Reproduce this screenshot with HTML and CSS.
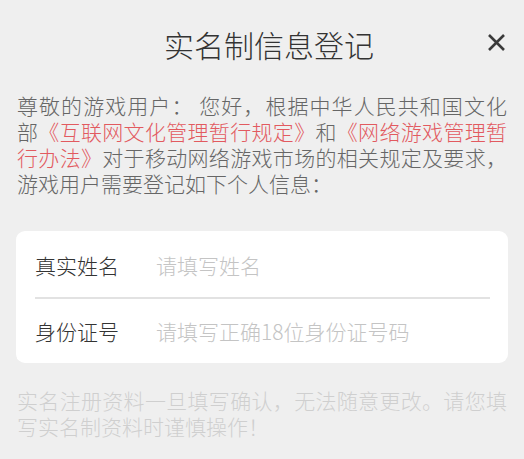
FILE: index.html
```html
<!DOCTYPE html>
<html lang="zh-CN">
<head>
<meta charset="utf-8">
<title>实名制信息登记</title>
<link rel="stylesheet" href="styles.css">
</head>
<body>
<div class="page">
  <header class="header">
    <span class="spacer"></span>
    <h1 class="title">实名制信息登记</h1>
    <button class="close" aria-label="关闭">
      <svg width="19" height="19" viewBox="0 0 19 19"><path d="M2 2 L17 17 M17 2 L2 17" stroke="#3a3a3a" stroke-width="2.6" stroke-linecap="butt" fill="none"/></svg>
    </button>
  </header>

  <p class="intro"><span class="ln">尊敬的游戏用户： 您好，根据中华人民共和国文化</span><span class="ln">部<a class="link">《互联网文化管理暂行规定》</a>和<a class="link">《网络游戏管理暂</a></span><span class="ln"><a class="link">行办法》</a>对于移动网络游戏市场的相关规定及要求，</span><span class="ln last">游戏用户需要登记如下个人信息：</span></p>

  <form class="card">
    <label class="row row-first">
      <span class="label">真实姓名</span>
      <input class="field" type="text" placeholder="请填写姓名">
    </label>
    <div class="divider"></div>
    <label class="row row-second">
      <span class="label">身份证号</span>
      <input class="field" type="text" placeholder="请填写正确18位身份证号码">
    </label>
  </form>

  <p class="note"><span class="ln">实名注册资料一旦填写确认，无法随意更改。请您填</span><span class="ln last">写实名制资料时谨慎操作！</span></p>
</div>
</body>
</html>
```
FILE: styles.css
```css
html, body {
  margin: 0;
  padding: 0;
  background: #efefef;
}

body {
  font-family: "Noto Sans CJK SC", "Noto Sans", "Liberation Sans", sans-serif;
  color: #666;
}

.page {
  width: 524px;
  min-height: 459px;
}

.header {
  height: 88px;
  display: grid;
  grid-template-columns: 1fr auto 1fr;
  align-items: center;
  padding: 0 18px 0 32px;
}

.title {
  margin: 0;
  font-size: 30px;
  font-weight: 300;
  line-height: 40px;
  color: #333;
  letter-spacing: 0;
}

.close {
  justify-self: end;
  background: none;
  border: 0;
  padding: 0;
  width: 19px;
  height: 19px;
  display: flex;
  margin-top: -3px;
}

.intro,
.note {
  margin: 4px 17px 0 17px;
  font-size: 21px;
  line-height: 26px;
  font-weight: 300;
}

.ln {
  display: block;
  text-align: justify;
  text-align-last: justify;
  text-justify: inter-character;
}

.ln.last {
  text-align-last: left;
}

.link {
  color: #e25a5f;
  text-decoration: none;
}

.card {
  margin: 35px 16px 0 16px;
  background: #fff;
  border-radius: 9px;
  display: flex;
  flex-direction: column;
}

.row {
  display: flex;
  align-items: center;
  padding: 0 19px;
  box-sizing: border-box;
}

.row-first {
  height: 66px;
  padding-top: 2px;
}

.row-second {
  height: 64px;
  padding-top: 0;
}

.label {
  width: 121px;
  flex: none;
  font-size: 21px;
  font-weight: 300;
  color: #333;
}

.field {
  flex: 1;
  min-width: 0;
  border: 0;
  outline: none;
  background: transparent;
  font-family: inherit;
  font-size: 21px;
  font-weight: 300;
  color: #333;
  padding: 0;
}

.field::placeholder {
  color: #c4c4c4;
}

.divider {
  height: 2px;
  background: #e2e2e2;
  margin: 0 18px 0 19px;
}

.note {
  margin-top: 24px;
  color: #cfcfcf;
}
```
